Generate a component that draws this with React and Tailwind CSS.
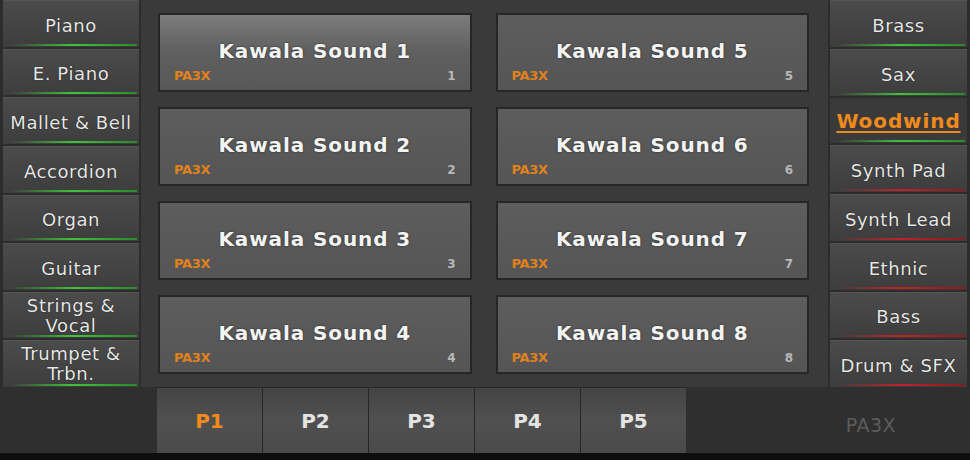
import React from "react";

const left = [
  ["Piano"],
  ["E. Piano"],
  ["Mallet & Bell"],
  ["Accordion"],
  ["Organ"],
  ["Guitar"],
  ["Strings &", "Vocal"],
  ["Trumpet &", "Trbn."],
];

const right = [
  { t: "Brass", c: "g" },
  { t: "Sax", c: "g" },
  { t: "Woodwind", c: "g", sel: true },
  { t: "Synth Pad", c: "r" },
  { t: "Synth Lead", c: "r" },
  { t: "Ethnic", c: "r" },
  { t: "Bass", c: "r" },
  { t: "Drum & SFX", c: "r" },
];

const font = { fontFamily: '"DejaVu Sans", Verdana, sans-serif' };

function CatButton({ lines, color = "g", sel = false }) {
  return (
    <div
      className={
        "relative flex-1 min-h-0 flex flex-col items-center justify-center leading-[21px] whitespace-nowrap " +
        (sel
          ? "bg-[#3a3a3a] text-[#f08a1c] font-bold underline underline-offset-[3px] text-[20px] tracking-[0.9px]"
          : "bg-gradient-to-b from-[#4b4b4b] to-[#3d3d3d] text-[#e8e8e8] border-t border-[#555] text-[18px] tracking-[0.6px]")
      }
      style={{ textShadow: sel ? "none" : "0 0 1px #000" }}
    >
      {lines.map((l, i) => (
        <span key={i} className={lines.length === 1 ? "mt-[3px]" : "-mt-[1px]"}>
          {l}
        </span>
      ))}
      <div
        className={
          "absolute bottom-[1px] left-[6px] right-[2px] h-[2px] " +
          (color === "g"
            ? "bg-gradient-to-r from-transparent via-[#3fc23a] to-[#2a8a2a]"
            : "bg-gradient-to-r from-transparent via-[#c0222a] to-[#8a1a1e]")
        }
      />
    </div>
  );
}

function Sound({ n, sel }) {
  return (
    <div
      className={
        "relative border-2 border-[#262626] flex items-center justify-center " +
        (sel
          ? "bg-gradient-to-b from-[#7c7c7c] via-[#5f5f5f] to-[#575757]"
          : "bg-gradient-to-b from-[#5d5d5d] to-[#555555]")
      }
    >
      <span
        className="text-[20px] tracking-[0.9px] font-bold text-[#f4f4f4] -mt-[3px]"
        style={{ textShadow: "0 0 2px #222" }}
      >
        Kawala Sound {n}
      </span>
      <span className="absolute left-[14px] bottom-[8px] text-[13px] font-bold text-[#e0821c] leading-none tracking-[-0.3px]">
        PA3X
      </span>
      <span className="absolute right-[14px] bottom-[8px] text-[12px] font-bold text-[#b8b8b8] leading-none">
        {n}
      </span>
    </div>
  );
}

export default function App() {
  return (
    <div className="w-[970px] h-[460px] bg-[#2f2f2f] flex flex-col overflow-hidden" style={font}>
      <div className="h-[387px] flex">
        <div className="w-[141px] bg-[#2c2c2c] flex flex-col gap-[2px] pl-[3px] pr-[2px]">
          {left.map((l, i) => (
            <CatButton key={i} lines={l} />
          ))}
        </div>
        <div className="flex-1 bg-[#3a3a3a] grid grid-cols-2 grid-rows-4 gap-x-[24px] gap-y-[15px] pl-[17px] pr-[19px] py-[13px]">
          {[1, 5, 2, 6, 3, 7, 4, 8].map((n) => (
            <Sound key={n} n={n} sel={n === 1} />
          ))}
        </div>
        <div className="w-[142px] bg-[#2c2c2c] flex flex-col gap-[2px] pl-[2px] pr-[3px]">
          {right.map((r, i) => (
            <CatButton key={i} lines={[r.t]} color={r.c} sel={r.sel} />
          ))}
        </div>
      </div>
      <div className="h-[66px] flex">
        <div className="w-[157px] bg-[#2f2f2f]" />
        <div className="flex gap-[1px] bg-[#262626] pt-[1px]">
          {["P1", "P2", "P3", "P4", "P5"].map((p, i) => (
            <div
              key={p}
              className={
                "w-[105px] flex items-center justify-center text-[20px] font-bold bg-gradient-to-b from-[#444] via-[#505050] to-[#4a4a4a] " +
                (i === 0 ? "text-[#f08a1c]" : "text-[#e4e4e4]")
              }
            >
              {p}
            </div>
          ))}
        </div>
        <div className="flex-1 flex items-center justify-end pr-[74px] pt-[10px]">
          <span className="text-[19px] tracking-[0.5px] text-[#5c5c5c]">PA3X</span>
        </div>
      </div>
      <div className="h-[7px] bg-[#0e0e0e]" />
    </div>
  );
}
